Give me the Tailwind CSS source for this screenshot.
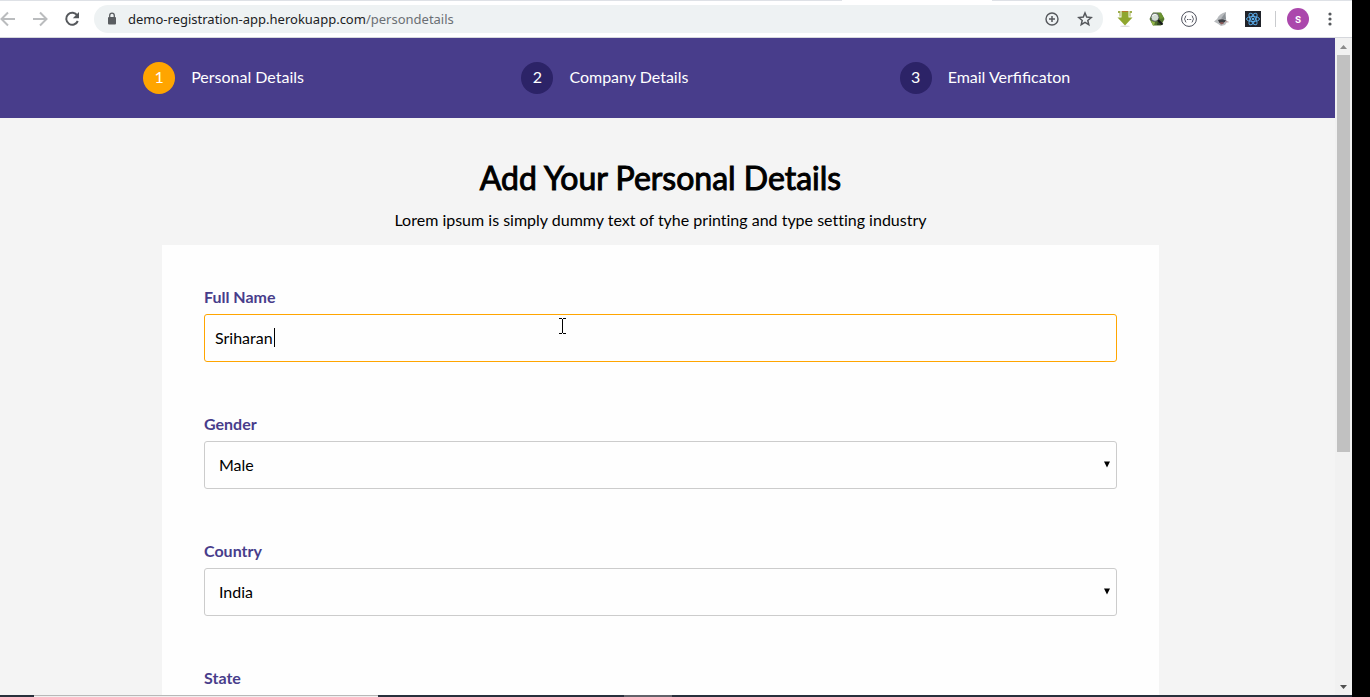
<!DOCTYPE html>
<html lang="en">
<head>
<meta charset="utf-8">
<title>Registration</title>
<script src="https://cdn.jsdelivr.net/npm/@tailwindcss/browser@4"></script>
</head>
<body class="flex h-screen flex-col overflow-hidden bg-black font-['Lato',sans-serif] text-base text-black">
  <div class="mr-[18px] flex min-h-0 flex-1 flex-col bg-white">
    <!-- Browser toolbar -->
    <div class="flex h-px shrink-0 bg-[#dee1e6]"><div class="ml-[842px] w-[150px] bg-white"></div></div>
    <header class="flex h-[37px] shrink-0 items-center border-b border-[#d5d7dc] bg-white pr-[14px]">
      <button aria-label="Back" class="flex w-4 justify-center">
        <svg class="h-4 w-4" viewBox="0 0 16 16" fill="none" stroke="#babcbe" stroke-width="2"><path d="M15 8H2M8 1.500L1.500 8L8 14.500"/></svg>
      </button>
      <button aria-label="Forward" class="ml-4 flex w-4 justify-center">
        <svg class="h-4 w-4" viewBox="0 0 16 16" fill="none" stroke="#babcbe" stroke-width="2"><path d="M1 8H14M8 1.500L14.500 8L8 14.500"/></svg>
      </button>
      <button aria-label="Reload" class="ml-4 flex w-4 justify-center">
        <svg class="h-4 w-4" viewBox="0 0 16 16"><path d="M13.300 4.500A6 6 0 1 0 13.800 10" fill="none" stroke="#55585c" stroke-width="2"/><path d="M15 1V7.200H8.800Z" fill="#55585c"/></svg>
      </button>
      <div class="ml-[14px] flex h-7 min-w-0 flex-1 items-center rounded-full bg-[#eef2f3] pr-[10px] pl-[13px]">
        <svg class="h-[14px] w-[10px] shrink-0" viewBox="0 0 10 14"><rect x="1" y="5" width="8" height="7.500" rx="1" fill="#5a5d61"/><path d="M2.700 6V3.500a2.300 2.300 0 0 1 4.600 0V6" fill="none" stroke="#5a5d61" stroke-width="1.300"/></svg>
        <a href="#" class="ml-[11px] flex-1 truncate font-['Noto_Sans',sans-serif] text-[13px] leading-5 text-[#202124]">demo-registration-app.herokuapp.com<span class="text-[#6b6f74]">/persondetails</span></a>
        <button aria-label="Install" class="mr-[17px]">
          <svg class="h-4 w-4" viewBox="0 0 16 16" fill="none" stroke="#55585c"><circle cx="8" cy="8" r="6" stroke-width="1.400"/><path d="M8 5v6M5 8h6" stroke-width="1.500"/></svg>
        </button>
        <button aria-label="Bookmark">
          <svg class="h-4 w-4" viewBox="0 0 16 16" fill="none" stroke="#55585c" stroke-width="1.500"><path d="M8 2L9.700 6.100L14.200 6.500L10.800 9.400L11.800 13.700L8 11.400L4.200 13.700L5.200 9.400L1.800 6.500L6.300 6.100Z"/></svg>
        </button>
      </div>
      <div class="ml-[14px] flex items-center gap-4">
        <button aria-label="Downloader">
          <svg class="h-4 w-4" viewBox="0 0 16 16"><ellipse cx="8" cy="15.300" rx="5" ry=".7" fill="#ddd"/><path d="M4.500 0h7v6.500H15.500L8 14.500L.5 6.500H4.500Z" fill="#8fa62e"/><path d="M1 0h2.500v5.500H2.500V2H1ZM15 0h-2.500v5.500h1V2H15Z" fill="#9fae4d"/><path d="M5 0h6v1H5Z" fill="#b5772e"/></svg>
        </button>
        <button aria-label="Inspector">
          <svg class="h-4 w-4" viewBox="0 0 16 16"><path d="M4 1.500h8L15.500 8L12 14.500H4L.5 8Z" fill="#54762f"/><path d="M9 2h3l3 5-4 1Z" fill="#6b9331"/><path d="M2 10l4 1-1 3.500H4Z" fill="#95b84a"/><path d="M9 9l5 5h-6Z" fill="#354a25"/><circle cx="6" cy="6.300" r="4" fill="#d3ddd4" stroke="#5b6260" stroke-width=".9"/><path d="M3.500 5c1-2 3-2 4-1" stroke="#fff" fill="none"/><path d="M9 9L13.500 13.500" stroke="#16181a" stroke-width="2"/></svg>
        </button>
        <button aria-label="JSON viewer">
          <svg class="h-4 w-4" viewBox="0 0 16 16" fill="none" stroke="#4c4f5b"><circle cx="8" cy="8" r="7.400"/><path d="M5.300 4.800C3.600 4.800 5 7.500 3.300 8C5 8.500 3.600 11.200 5.300 11.200M10.700 4.800C12.400 4.800 11 7.500 12.700 8C11 8.500 12.400 11.200 10.700 11.200"/><path d="M6 8.500h1m.6 0h1m.6 0h1"/></svg>
        </button>
        <button aria-label="Extension">
          <svg class="h-4 w-4" viewBox="0 0 16 16"><path d="M13 1C8.500 2 5.500 4.500 4 8L1 10.500l3.500 2L8 15l4-1L14 11l-1-3Z" fill="#b8bbbe"/><path d="M13 1C11 4 13 5 13 8.500L8 7.500Z" fill="#8e9398"/><path d="M5 9C8 7.500 11.500 8 13.500 10L10 12H6.500Z" fill="#3d3f45"/><path d="M6.500 11.500l3-.5 1.500 1.500L8 13.500Z" fill="#8b5a58"/><path d="M12 10.500l3.500.5" stroke="#b99c9c"/></svg>
        </button>
        <button aria-label="React tools">
          <svg class="h-4 w-4" viewBox="0 0 16 16"><rect width="16" height="16" fill="#20232a"/><g fill="none" stroke="#5aa9e6"><ellipse cx="8" cy="8" rx="6.500" ry="2.500"/><ellipse cx="8" cy="8" rx="6.500" ry="2.500" transform="rotate(60 8 8)"/><ellipse cx="8" cy="8" rx="6.500" ry="2.500" transform="rotate(120 8 8)"/></g><circle cx="8" cy="8" r="1.300" fill="#5aa9e6"/></svg>
        </button>
      </div>
      <div class="ml-[14px] h-4 w-px bg-[#c9cbce]"></div>
      <button class="ml-[11px] h-[22px] w-[22px] rounded-full bg-[#ab47ac] text-center font-['Roboto',sans-serif] text-xs leading-[22px] font-medium text-white">s</button>
      <button aria-label="Menu" class="ml-[13px]">
        <svg class="h-4 w-4" viewBox="0 0 16 16" fill="#55585c"><circle cx="8" cy="3" r="1.600"/><circle cx="8" cy="8" r="1.600"/><circle cx="8" cy="13" r="1.600"/></svg>
      </button>
    </header>

    <div class="flex min-h-0 flex-1">
      <div class="min-w-0 flex-1 overflow-hidden bg-[#f4f4f4]">
        <!-- Steps -->
        <nav class="bg-[#483d8b] py-6">
          <ol class="mx-auto grid w-[85%] grid-cols-3 leading-[30px] text-white">
            <li class="flex gap-4 pl-[43px]"><span class="h-8 w-8 rounded-full bg-[#ffa500] text-center">1</span>Personal Details</li>
            <li class="flex gap-4 pl-[43px]"><span class="h-8 w-8 rounded-full bg-[#2c2367] text-center">2</span>Company Details</li>
            <li class="flex gap-4 pl-[43px]"><span class="h-8 w-8 rounded-full bg-[#2c2367] text-center">3</span>Email Verfificaton</li>
          </ol>
        </nav>
        <main class="pt-10 pr-[14px]">
          <h1 class="text-center text-[32px] leading-10 [-webkit-text-stroke:1px]">Add Your Personal Details</h1>
          <p class="mt-[10px] text-center leading-6 [font-variant-ligatures:none]">Lorem ipsum is simply dummy text of tyhe printing and type setting industry</p>
          <form class="mx-auto mt-[13px] flex w-full max-w-[997px] flex-col gap-[50px] bg-[#fefefe] px-[42px] pt-10 pb-10">
            <div class="flex flex-col gap-[5px]">
              <label for="name" class="font-bold leading-6 text-[#483d8b]">Full Name</label>
              <div class="relative">
                <input id="name" type="text" value="Sriharan" class="h-12 w-full rounded-[3px] border border-[#ffa500] px-[10px] pb-[2px] outline-none">
                <span class="absolute top-[14px] left-[70px] h-[19px] w-px bg-black"></span>
                <svg class="absolute top-1 left-[355px] h-4 w-[7px]" viewBox="0 0 7 16" fill="none" stroke="#000" shape-rendering="crispEdges"><path d="M0 .5h3M4 .5h3M3.500 1v14M0 15.500h3M4 15.500h3"/></svg>
              </div>
            </div>
            <div class="flex flex-col gap-[5px]">
              <label for="gender" class="font-bold leading-6 text-[#483d8b]">Gender</label>
              <div class="relative">
                <select id="gender" class="h-12 w-full appearance-none rounded-[3px] border border-[#ccc] px-[14px]"><option>Male</option></select>
                <svg class="pointer-events-none absolute top-5 right-[7px] h-[7px] w-[6px]" viewBox="0 0 6 7"><path d="M0 .5H6L3 6.500Z"/></svg>
              </div>
            </div>
            <div class="flex flex-col gap-[5px]">
              <label for="country" class="font-bold leading-6 text-[#483d8b]">Country</label>
              <div class="relative">
                <select id="country" class="h-12 w-full appearance-none rounded-[3px] border border-[#ccc] px-[14px]"><option>India</option></select>
                <svg class="pointer-events-none absolute top-5 right-[7px] h-[7px] w-[6px]" viewBox="0 0 6 7"><path d="M0 .5H6L3 6.500Z"/></svg>
              </div>
            </div>
            <div class="flex flex-col gap-[5px]">
              <label for="state" class="font-bold leading-6 text-[#483d8b]">State</label>
              <select id="state" class="h-12 w-full appearance-none rounded-[3px] border border-[#ccc] px-[14px]"></select>
            </div>
          </form>
        </main>
      </div>
      <!-- Scrollbar -->
      <div class="flex w-[17px] shrink-0 flex-col items-center bg-[#f1f1f1]">
        <div class="flex h-[17px] items-center"><svg class="h-1 w-[7px]" viewBox="0 0 7 4"><path d="M0 4L3.500 0L7 4Z" fill="#8b8b8b"/></svg></div>
        <div class="flex w-full flex-1 flex-col px-[2px]"><div class="grow-[397] bg-[#c1c1c1]"></div><div class="grow-[226]"></div></div>
        <div class="flex h-[17px] items-center"><svg class="h-1 w-[7px]" viewBox="0 0 7 4"><path d="M0 0L3.500 4L7 0Z" fill="#505050"/></svg></div>
      </div>
    </div>
  </div>
  <!-- Taskbar edge -->
  <div class="mr-[18px] flex h-[2px] shrink-0 bg-[#28303c]">
    <div class="ml-[34px] w-[344px] border-t border-[#b8b8b8] bg-[#f0f0f0]"></div>
    <div class="ml-[246px] w-12 bg-[#62626a]"></div>
  </div>
</body>
</html>
